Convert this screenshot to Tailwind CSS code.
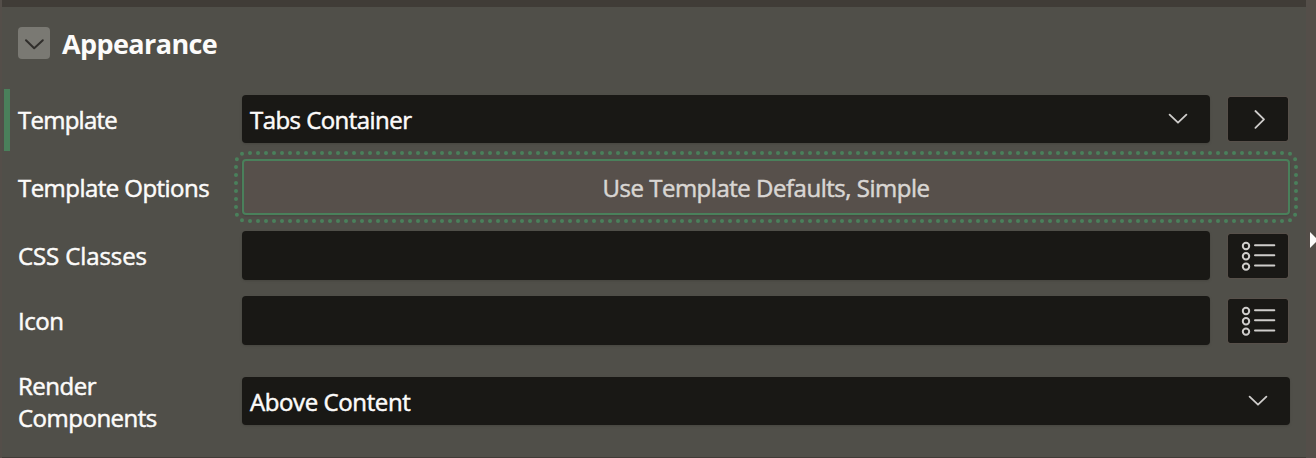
<!DOCTYPE html>
<html lang="en">
<head>
<meta charset="utf-8">
<title>Appearance</title>
<script src="https://cdn.jsdelivr.net/npm/@tailwindcss/browser@4"></script>
</head>
<body class="h-[458px] w-[1316px] overflow-hidden bg-[#544e49] font-['Open_Sans',sans-serif] text-[24px] text-[#fcfbfa] [-webkit-text-stroke:0.5px_currentColor]">
<svg class="hidden">
  <symbol id="list" viewBox="0 0 60 44">
    <g fill="none" stroke="#cfcdcb" stroke-width="2"><circle cx="18" cy="12" r="3.2"/><circle cx="18" cy="22.3" r="3.2"/><circle cx="18" cy="32.6" r="3.2"/></g>
    <path d="M27 11.2H46.3M27 21.3H46.3M27 31.5H46.3" stroke="#cfcdcb" stroke-width="2" stroke-linecap="round"/>
  </symbol>
</svg>
<div class="relative ml-[2px] flex h-[458px] w-[1304px] flex-col border-t-[7px] border-b border-t-[#403c37] border-b-[#403c37] bg-[#504f49]">
  <div class="flex h-[82px] shrink-0 pt-5 pl-4">
    <div class="flex size-8 items-center justify-center rounded bg-[#7a7973]">
      <svg class="size-8" viewBox="0 0 32 32" fill="none" stroke="#302e2b" stroke-width="2" stroke-linecap="round" stroke-linejoin="round"><path d="M8 13.3 16.2 21.3 24.8 13.3"/></svg>
    </div>
    <h2 class="ml-3 h-8 text-[27px] leading-[34px] font-bold tracking-[-0.6px] whitespace-nowrap [-webkit-text-stroke:0]">Appearance</h2>
  </div>

  <div class="flex h-[62px] shrink-0 items-center">
    <div class="ml-[2px] h-[62px] w-[6px] bg-[#4a805b]"></div>
    <label class="w-[232px] pl-2 tracking-[-0.75px]">Template</label>
    <div class="mb-[2px] flex h-12 w-[968px] items-center justify-between rounded bg-[#191815] pr-[22px] pl-2 shadow-sm">
      <span class="pt-[2px] tracking-[-0.55px]">Tabs Container</span>
      <svg class="h-5 w-5" viewBox="0 0 20 20" fill="none" stroke="#cfcdcb" stroke-width="1.8" stroke-linecap="round" stroke-linejoin="round"><path d="M1.6 5.7 10 13.7 18.4 5.7"/></svg>
    </div>
    <div class="mb-[2px] ml-[18px] h-11 w-[60px] rounded-xs bg-[#191815] outline outline-[#57504a]">
      <svg class="h-11 w-[60px]" viewBox="0 0 60 44" fill="none" stroke="#cfcdcb" stroke-width="1.8" stroke-linecap="round" stroke-linejoin="round"><path d="M27.4 14 36 22.3 27.4 30.8"/></svg>
    </div>
  </div>

  <div class="flex h-[72px] shrink-0 items-center pl-4">
    <label class="w-[224px] pt-[2px] tracking-[-0.55px] whitespace-nowrap">Template Options</label>
    <div class="relative flex h-14 w-[1048px] items-center justify-center rounded border-2 border-[#4a805b] bg-[#57504b] text-[#d9d6d3] shadow-sm">
      <span class="pt-[2px] tracking-[-0.48px]">Use Template Defaults, Simple</span>
      <svg class="absolute -top-[10px] -left-[10px] h-[72px] w-[1064px]" viewBox="0 0 1064 72" fill="none" stroke="#4a805b" stroke-width="4" stroke-linecap="round">
        <path d="M16 2H1048.5M16 70H1048.5M2 16V56.5M1062 16V56.5" stroke-dasharray="0 8"/>
        <path d="M8 2.7h0M2.9 8.2h0M8 69.3h0M2.9 63.8h0M1056 2.7h0M1061.1 8.2h0M1056 69.3h0M1061.1 63.8h0"/>
      </svg>
    </div>
  </div>

  <div class="flex h-[65px] shrink-0 items-center pl-4">
    <label class="w-[224px] tracking-[-0.1px]">CSS Classes</label>
    <div class="h-[49px] w-[968px] rounded bg-[#191815] shadow-sm"></div>
    <div class="ml-[18px] h-11 w-[60px] rounded-xs bg-[#191815] outline outline-[#57504a]"><svg class="h-11 w-[60px]"><use href="#list"/></svg></div>
  </div>

  <div class="flex h-[65px] shrink-0 items-center pl-4">
    <label class="w-[224px] tracking-[-0.5px]">Icon</label>
    <div class="h-[49px] w-[968px] rounded bg-[#191815] shadow-sm"></div>
    <div class="ml-[18px] h-11 w-[60px] rounded-xs bg-[#191815] outline outline-[#57504a]"><svg class="h-11 w-[60px]"><use href="#list"/></svg></div>
  </div>

  <div class="flex h-[96px] shrink-0 items-center pl-4">
    <label class="w-[224px] pt-[2px] leading-8 tracking-[-0.5px]">Render<br>Components</label>
    <div class="flex h-12 w-[1048px] items-center justify-between rounded bg-[#191815] pr-[22px] pl-2 shadow-sm">
      <span class="pt-[2px] tracking-[-0.4px]">Above Content</span>
      <svg class="h-5 w-5" viewBox="0 0 20 20" fill="none" stroke="#cfcdcb" stroke-width="1.8" stroke-linecap="round" stroke-linejoin="round"><path d="M1.6 5.7 10 13.7 18.4 5.7"/></svg>
    </div>
  </div>
  <svg class="absolute top-[225px] left-[1308px] h-4 w-[8px]" viewBox="0 0 8 16"><path d="M0 0 8 8 0 16Z" fill="#fcfbfa"/></svg>
</div>
</body>
</html>
